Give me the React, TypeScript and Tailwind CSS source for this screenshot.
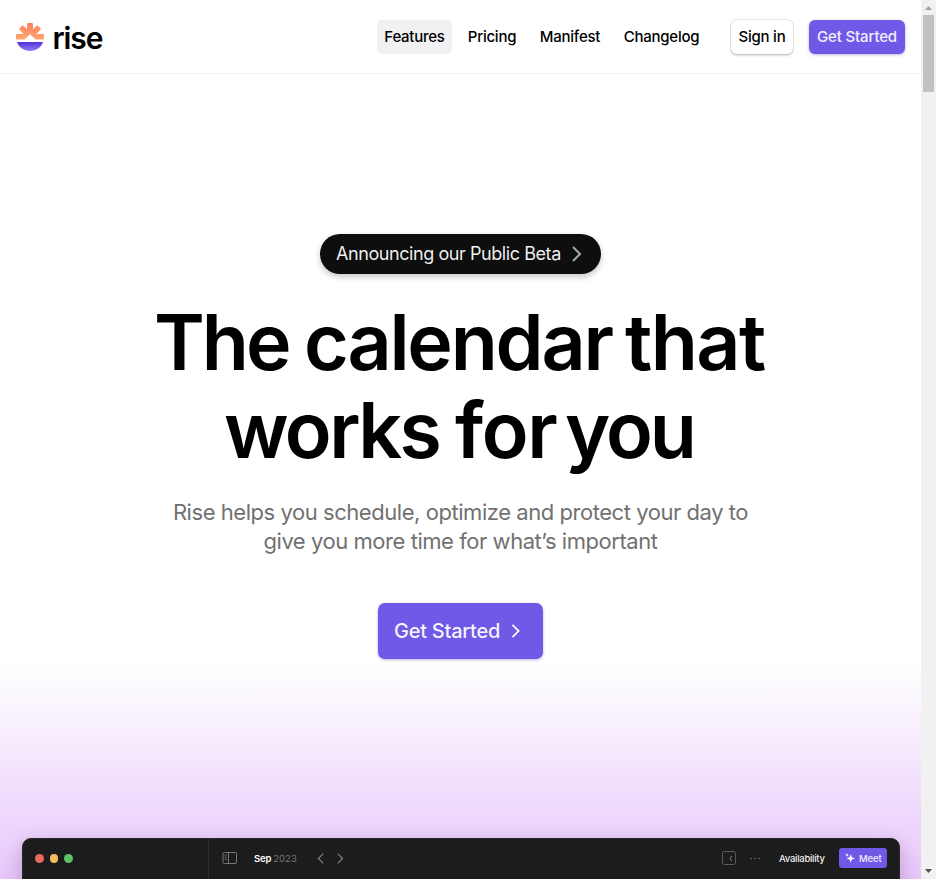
import React from "react";

function Logo() {
  return (
    <div className="flex h-[34px] items-center">
      <svg width="28" height="28" viewBox="0 0 28 28">
        <defs>
          <linearGradient id="sun" x1="0" y1="0" x2="0" y2="17" gradientUnits="userSpaceOnUse">
            <stop offset="0" stopColor="#ff8066" />
            <stop offset="1" stopColor="#ffa76c" />
          </linearGradient>
          <linearGradient id="sea" x1="0" y1="0" x2="0" y2="1">
            <stop offset="0" stopColor="#5530d8" />
            <stop offset="1" stopColor="#8c7cf4" />
          </linearGradient>
        </defs>
        <g fill="url(#sun)">
          <path d="M11 1.200Q11 0 12.200 0h3.600q1.200 0 1.200 1.200V6.200l3.500-3.300q.8-.7 1.600 0l2.300 2.300q.8.8 0 1.600L20.400 11h6.400q1.200 0 1.200 1.200v3.200q0 1.200-1.200 1.200h-7.200L14 11.200l-5.600 5.400H1.200Q0 16.600 0 15.400v-3.200Q0 11 1.200 11h6.400L3.600 6.800q-.8-.8 0-1.600l2.300-2.300q.8-.7 1.600 0L11 6.200z" />
        </g>
        <path fill="url(#sea)" d="M1 19h26C25.200 24.500 20.200 28 14 28S2.800 24.500 1 19z" />
      </svg>
      <span className="ml-[8.500px] pt-[2px] text-[30px] leading-[34px] font-semibold tracking-[-1.1px]">rise</span>
    </div>
  );
}

function Header() {
  return (
    <header className="flex h-[74px] items-center border-b border-[#efeff1] bg-white pr-4 pl-4">
      <Logo />
      <nav className="ml-auto flex gap-2 text-[15px] leading-[34px] font-medium tracking-[-0.25px]">
        <a className="w-[75px] rounded-[5px] bg-[#f1f1f3] text-center">Features</a>
        <a className="w-[64px] text-center">Pricing</a>
        <a className="w-[76px] text-center">Manifest</a>
        <a className="w-[91px] text-center">Changelog</a>
      </nav>
      <a className="ml-[24px] h-[34px] w-[62px] rounded-[6px] bg-white text-center text-[15px] leading-[34px] font-medium tracking-[-0.25px] shadow-[0_0_0_1px_rgba(0,0,0,0.1),0_2px_2px_rgba(0,0,0,0.14)]">
        Sign in
      </a>
      <a className="ml-4 h-[34px] w-[96px] rounded-[6px] bg-[#7059e6] text-center text-[15px] leading-[34px] font-medium tracking-[-0.15px] text-white/90 shadow-[0_1px_3px_rgba(60,40,160,0.35)]">
        Get Started
      </a>
    </header>
  );
}

function Chevron({ size, width, left = false }: { size: number; width: number; left?: boolean }) {
  return (
    <svg
      width={size}
      height={size}
      viewBox="0 0 16 16"
      fill="none"
      stroke="currentColor"
      strokeWidth={(width * 16) / size}
      className="shrink-0"
    >
      <path d={left ? "M12 1L5 8l7 7" : "M4 1l7 7-7 7"} />
    </svg>
  );
}

function AppWindow() {
  return (
    <div className="mt-[179px] ml-[22px] flex h-[60px] w-[878px] items-start rounded-t-[9px] border border-[#282829] bg-[#1c1c1c] text-[10px] leading-[12px] shadow-[0_6px_18px_rgba(60,20,90,0.26)]">
      <div className="flex h-full w-[186px] gap-[6px] border-r border-[#2b2b2b] pt-[15px] pl-[12px]">
        <i className="h-[8.500px] w-[8.500px] rounded-full bg-[#ec6a5e]" />
        <i className="h-[8.500px] w-[8.500px] rounded-full bg-[#f4bd60]" />
        <i className="h-[8.500px] w-[8.500px] rounded-full bg-[#5bc466]" />
      </div>
      <div className="flex h-[38px] flex-1 items-center pr-[12px] pl-[13px]">
        <svg width="16" height="12" viewBox="0 0 16 12" fill="none" stroke="#777" strokeWidth="1">
          <rect x="1" y=".5" width="13.500" height="11" rx="1.500" />
          <path d="M6.500 1v10M2.700 3h2M2.700 5.200h2M2.700 7.400h2" />
        </svg>
        <span className="ml-[16px] w-[42px] whitespace-nowrap pt-[1px] text-[9.500px] font-semibold tracking-[-0.2px] text-white">
          Sep <span className="font-normal tracking-[0px] text-[#777]">2023</span>
        </span>
        <div className="ml-[19px] flex gap-[9px] text-[#808080]">
          <Chevron size={11} width={1.2} left />
          <Chevron size={11} width={1.2} />
        </div>
        <svg width="14" height="14" viewBox="0 0 14 14" fill="none" stroke="#5c5c5c" className="ml-auto">
          <rect x=".5" y=".5" width="13" height="13" rx="2" />
          <path d="M10 5L8 7.500 10 10" stroke="#888" />
        </svg>
        <svg width="10" height="3" viewBox="0 0 10 3" fill="#777" className="ml-[14px]">
          <circle cx="1" cy="1.500" r=".8" />
          <circle cx="5" cy="1.500" r=".8" />
          <circle cx="9" cy="1.500" r=".8" />
        </svg>
        <span className="ml-[19px] w-[46px] whitespace-nowrap pt-[1px] text-[9.500px] font-medium tracking-[-0.28px] text-white/95">Availability</span>
        <span className="ml-[14px] flex h-[20px] w-[48px] items-center rounded-[3px] bg-[#7059e6] pl-[6px] text-[9.500px] font-medium text-white/90">
          <svg width="10" height="10" viewBox="0 0 10 10" fill="#fff">
            <path d="M5.700 1.200L6.900 4.200 9.900 5.400 6.900 6.600 5.700 9.600 4.500 6.600 1.500 5.400 4.500 4.200zM2 0l.6 1.400L4 2l-1.400.6L2 4l-.6-1.400L0 2l1.400-.6z" />
          </svg>
          <span className="ml-[4px] pt-[1px] tracking-[-0.1px]">Meet</span>
        </span>
      </div>
    </div>
  );
}

function Scrollbar() {
  return (
    <aside className="flex h-full w-[15px] flex-col items-center bg-[#f1f1f1]">
      <svg width="15" height="15" viewBox="0 0 15 15"><path d="M4 10h7L7.500 6z" fill="#a3a3a3" /></svg>
      <div className="h-[77px] w-[11px] bg-[#c1c1c1]" />
      <svg width="15" height="15" viewBox="0 0 15 15" className="mt-auto"><path d="M4 5h7L7.500 9z" fill="#505050" /></svg>
    </aside>
  );
}

export default function App() {
  return (
    <div className="flex h-[879px] w-[936px] overflow-hidden bg-white font-['Inter',sans-serif] text-black">
      <div className="h-full w-[921px] overflow-hidden">
        <Header />
        <main className="flex h-[820px] flex-col bg-[linear-gradient(to_bottom,#fff_590px,#faf5fe_630px,#f5e8fd_680px,#efdafd_730px,#ebcffb_775px,#e5c3f8_810px)]">
          <a className="mx-auto mt-[160px] flex h-[40px] w-[281px] shrink-0 items-center rounded-full bg-[#0e0e0e] pl-4 text-[18px] tracking-[-0.43px] text-white/95 shadow-[0_3px_6px_rgba(0,0,0,0.22)]">
            <span className="w-[226px] pb-[1px] whitespace-nowrap">Announcing our Public Beta</span>
            <span className="ml-[7px] text-[#aaa]"><Chevron size={16} width={2} /></span>
          </a>
          <h1 className="mt-[24px] text-[77px] leading-[88px] font-semibold">
            <span className="flex pl-[154px]">
              <span className="w-[150px] tracking-[-3px]">The</span>
              <span className="w-[321px] tracking-[-2.2px]">calendar</span>
              <span className="tracking-[-1.6px]">that</span>
            </span>
            <span className="flex pl-[224px]">
              <span className="w-[231px] tracking-[-2.6px]">works</span>
              <span className="w-[110px] tracking-[-1.4px]">for</span>
              <span className="tracking-[-3px]">you</span>
            </span>
          </h1>
          <p className="mt-[24px] text-center text-[22px] leading-[29px] tracking-[-0.45px] text-[#717171]">
            Rise helps you schedule, optimize and protect your day to
            <br />
            give you more time for what’s important
          </p>
          <a className="mx-auto mt-[47px] flex h-[56px] w-[165px] shrink-0 items-center rounded-[7px] bg-[#7059e6] pl-4 text-[20px] font-medium tracking-[-0.25px] text-white/95 shadow-[0_1px_3px_rgba(60,40,160,0.35)]">
            <span className="w-[107px] whitespace-nowrap">Get Started</span>
            <span className="ml-[8px]"><Chevron size={14} width={1.8} /></span>
          </a>
          <AppWindow />
        </main>
      </div>
      <Scrollbar />
    </div>
  );
}
